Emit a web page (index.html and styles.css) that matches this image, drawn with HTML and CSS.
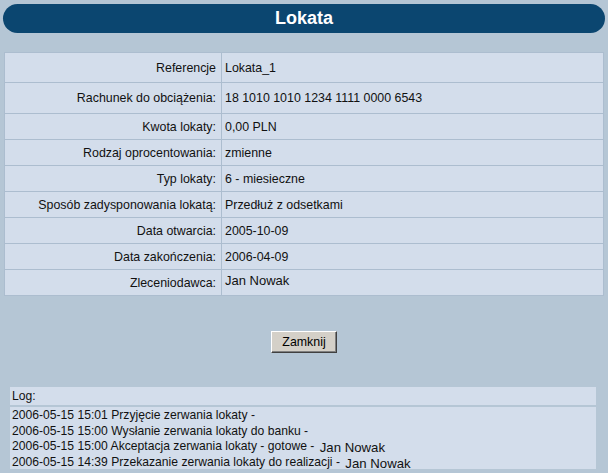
FILE: index.html
```html
<!DOCTYPE html>
<html lang="pl">
<head>
<meta charset="utf-8">
<title>Lokata</title>
<link rel="stylesheet" href="styles.css">
</head>
<body>
<div class="page">
  <div class="titlebar">Lokata</div>

  <div class="details">
    <div class="lbl">Referencje</div><div class="val">Lokata_1</div>
    <div class="lbl">Rachunek do obciążenia:</div><div class="val">18 1010 1010 1234 1111 0000 6543</div>
    <div class="lbl">Kwota lokaty:</div><div class="val">0,00 PLN</div>
    <div class="lbl">Rodzaj oprocentowania:</div><div class="val">zmienne</div>
    <div class="lbl">Typ lokaty:</div><div class="val">6 - miesieczne</div>
    <div class="lbl">Sposób zadysponowania lokatą:</div><div class="val">Przedłuż z odsetkami</div>
    <div class="lbl">Data otwarcia:</div><div class="val">2005-10-09</div>
    <div class="lbl">Data zakończenia:</div><div class="val">2006-04-09</div>
    <div class="lbl">Zleceniodawca:</div><div class="val top"><span class="name">Jan Nowak</span></div>
  </div>

  <div class="actions">
    <button class="btn" type="button">Zamknij</button>
  </div>

  <div class="log">
    <div class="log-head">Log:</div>
    <div class="log-body">
      <div class="log-line">2006-05-15 15:01 Przyjęcie zerwania lokaty -</div>
      <div class="log-line">2006-05-15 15:00 Wysłanie zerwania lokaty do banku -</div>
      <div class="log-line">2006-05-15 15:00 Akceptacja zerwania lokaty - gotowe - <span class="who">Jan Nowak</span></div>
      <div class="log-line">2006-05-15 14:39 Przekazanie zerwania lokaty do realizacji - <span class="who">Jan Nowak</span></div>
    </div>
  </div>
</div>
</body>
</html>
```

FILE: styles.css
```css
html, body {
  margin: 0;
  padding: 0;
  background: #b5c6d5;
}
body {
  font-family: "Liberation Sans", Arial, sans-serif;
  font-size: 12px;
  color: #111;
}
.page {
  width: 608px;
  height: 473px;
  overflow: hidden;
  padding-top: 4px;
  box-sizing: border-box;
}
.titlebar {
  margin: 0 3px;
  height: 29px;
  border-radius: 15px;
  background: #0b4670;
  color: #fff;
  font-weight: bold;
  font-size: 18px;
  line-height: 29px;
  text-align: center;
}
.details {
  margin: 19px 4px 0;
  padding: 1px;
  background: #acbdcf;
  display: grid;
  grid-template-columns: 216px 1fr;
  grid-template-rows: 29px 30px;
  grid-auto-rows: 25px;
  gap: 1px;
  font-size: 12.4px;
}
.lbl, .val {
  background: #d3ddeb;
  display: flex;
  align-items: center;
  white-space: nowrap;
}
.lbl {
  justify-content: flex-end;
  padding-right: 5px;
}
.val {
  padding-left: 3px;
}
.val.top {
  align-items: flex-start;
  padding-top: 3px;
}
.name {
  font-size: 13px;
}
.actions {
  display: flex;
  justify-content: center;
  margin-top: 35px;
}
.btn {
  width: 66px;
  height: 22px;
  padding: 0;
  background: #d4d0c8;
  font-family: "Liberation Sans", Arial, sans-serif;
  font-size: 12.4px;
  color: #000;
  border: 1px solid;
  border-color: #ffffff #404040 #404040 #ffffff;
  box-shadow: inset -1px -1px 0 #808080;
}
.log {
  margin: 34px 12px 0 10px;
  background: #b5c6d5;
  font-size: 12.15px;
}
.log-head {
  height: 18px;
  line-height: 18px;
  background: #d3ddeb;
  padding-left: 2px;
}
.log-body {
  margin-top: 2px;
  height: 62px;
  background: #d3ddeb;
  padding: 0 2px;
  box-sizing: border-box;
}
.log-line {
  height: 15.5px;
  line-height: 16px;
  white-space: nowrap;
}
.who {
  font-size: 13.2px;
  vertical-align: -2px;
  margin-left: 2px;
}
```
